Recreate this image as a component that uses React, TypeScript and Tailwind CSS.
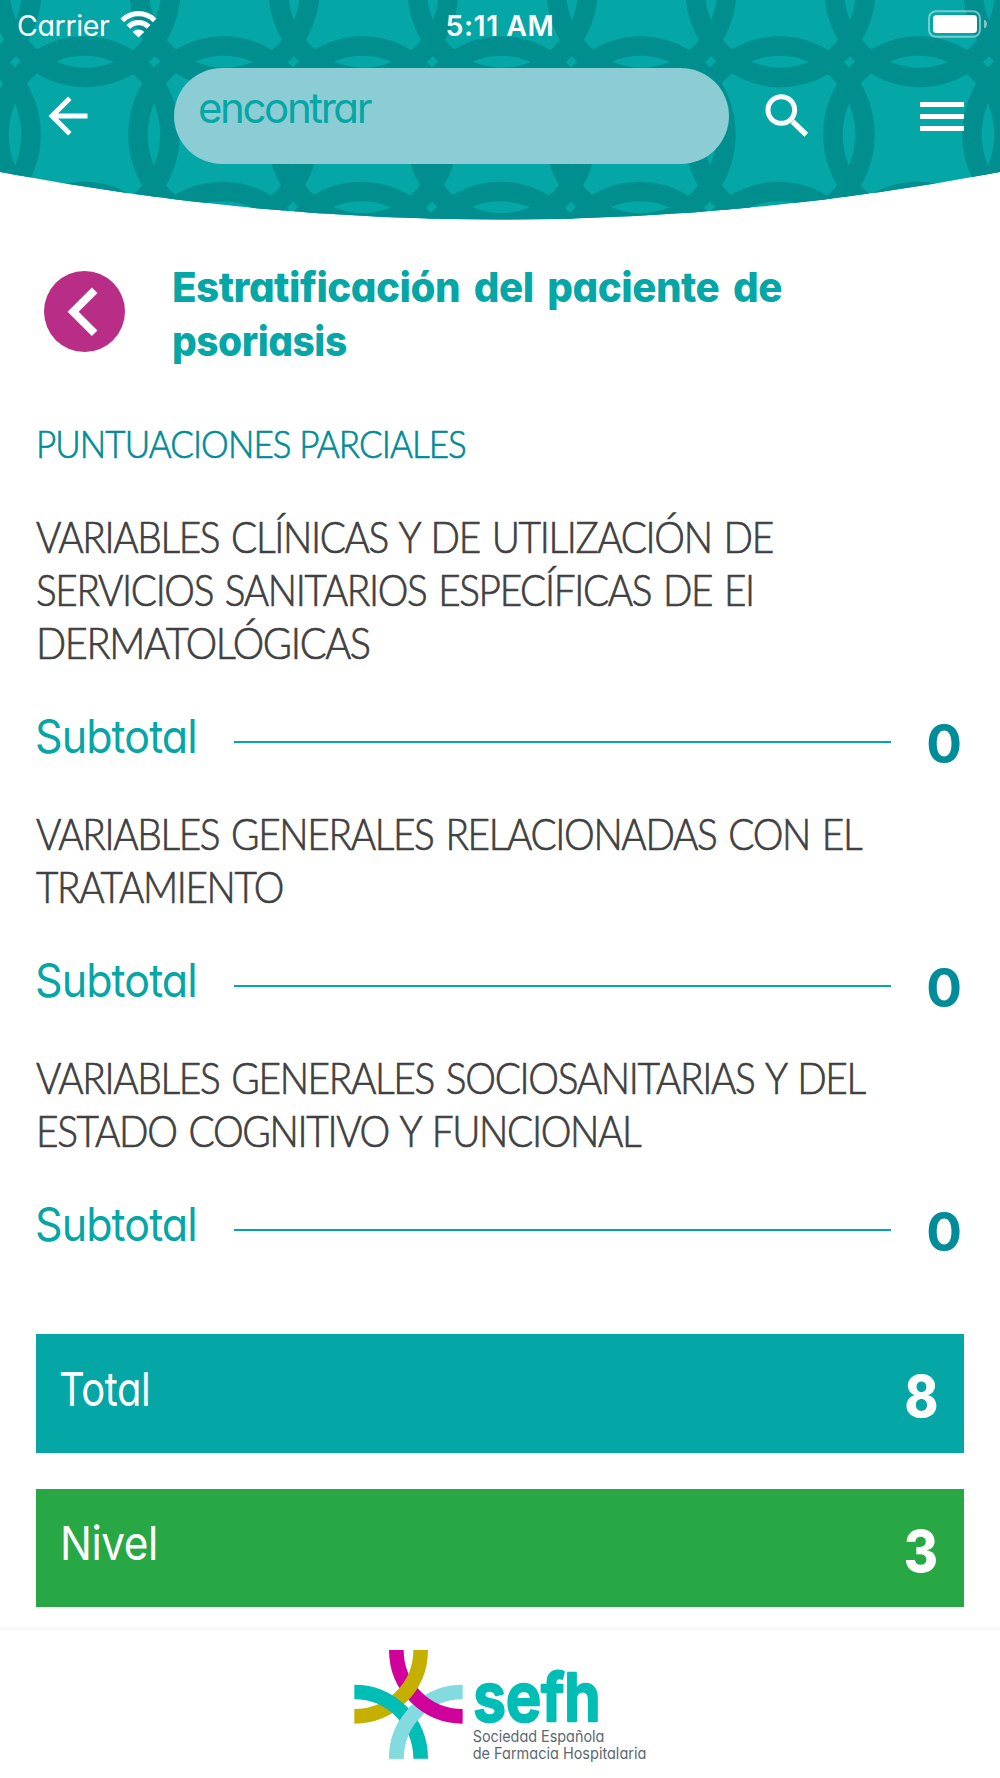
const rings = [
  { cx: 85.5, cy: -11 },
  { cx: 84.5, cy: 134.5 },
  { cx: 83.5, cy: 280 },
];

const columns = [-1, 0, 1, 2, 3, 4, 5, 6, 7];

const sections = [
  {
    lines: [
      { text: "VARIABLES CLÍNICAS Y DE UTILIZACIÓN DE", scale: "scale-x-[0.902]" },
      { text: "SERVICIOS SANITARIOS ESPECÍFICAS DE EI", scale: "scale-x-[0.9]" },
      { text: "DERMATOLÓGICAS", scale: "scale-x-[0.924]" },
    ],
    value: 0,
  },
  {
    lines: [
      { text: "VARIABLES GENERALES RELACIONADAS CON EL", scale: "scale-x-[0.902]" },
      { text: "TRATAMIENTO", scale: "scale-x-[0.9]" },
    ],
    value: 0,
  },
  {
    lines: [
      { text: "VARIABLES GENERALES SOCIOSANITARIAS Y DEL", scale: "scale-x-[0.903]" },
      { text: "ESTADO COGNITIVO Y FUNCIONAL", scale: "scale-x-[0.903]" },
    ],
    value: 0,
  },
];

const HeaderPattern = () => (
  <svg
    className="absolute inset-0 h-[220px] w-[1000px]"
    viewBox="0 0 1000 220"
    aria-hidden="true"
  >
    <defs>
      <clipPath id="curve">
        <path d="M0 0H1000V172Q500 267 0 172Z" />
      </clipPath>
    </defs>
    <g clipPath="url(#curve)">
      <rect width="1000" height="220" fill="#04a6a6" />
      <g fill="none" stroke="#008e8f" strokeWidth="19.5">
        {rings.map((row) =>
          columns.map((col) => (
            <ellipse
              key={`${row.cy}-${col}`}
              cx={row.cx + col * 139}
              cy={row.cy}
              rx="85.5"
              ry="88.5"
            />
          )),
        )}
      </g>
    </g>
  </svg>
);

const StatusBar = () => (
  <div className="relative grid h-12 grid-cols-3 items-center px-[17px] text-white">
    <div className="flex items-center gap-[11px]">
      <span className="pt-[4px] text-[28.5px] leading-none tracking-[-0.35px]">Carrier</span>
      <svg className="h-[28px] w-[37px]" viewBox="0 0 38 28" aria-hidden="true">
        <g fill="none" stroke="currentColor" strokeWidth="5.4">
          <path d="M2.3 10.2A23.6 23.6 0 0 1 35.7 10.2" />
          <path d="M8.6 17A14.7 14.7 0 0 1 29.4 17" />
        </g>
        <path d="M19 27.8L13 22.1A8.4 8.4 0 0 1 25 22.1Z" fill="currentColor" />
      </svg>
    </div>
    <span className="pt-[4px] text-center text-[28.5px] leading-none font-semibold tracking-[0.5px]">
      5:11 AM
    </span>
    <svg className="-mr-[4px] h-[28px] w-[60px] justify-self-end" viewBox="0 0 60 28" aria-hidden="true">
      <rect x="2" y="1.2" width="51" height="25.6" rx="7" fill="none" stroke="#fff" strokeOpacity=".45" strokeWidth="2" />
      <rect x="6" y="5" width="44" height="18" rx="3.5" fill="#fff" />
      <path d="M57 9.5q3 1.5 3 4.5t-3 4.5z" fill="#fff" fillOpacity=".5" />
    </svg>
  </div>
);

const Toolbar = () => (
  <div className="relative mt-5 flex h-24 items-center pr-9 pl-12 text-white">
    <svg className="h-[40px] w-[40px]" viewBox="0 0 40 40" fill="none" stroke="currentColor" strokeWidth="5" aria-hidden="true">
      <path d="M39.5 20H4M21.8 2.3L4 20L21.8 37.7" />
    </svg>
    <div className="ml-[86px] h-full w-[555px] rounded-full bg-[#8ccdd5] pt-[14px] pl-[24px]">
      <span className="block text-[42px] leading-[52px] font-normal tracking-[-2.4px] text-[#04a6a6]">
        encontrar
      </span>
    </div>
    <svg className="ml-[36px] h-[44px] w-[44px]" viewBox="0 0 44 44" fill="none" stroke="currentColor" aria-hidden="true">
      <circle cx="16.3" cy="16" r="13.3" strokeWidth="5" />
      <path d="M27.5 27.5L41.3 40.8" strokeWidth="5.5" />
    </svg>
    <div className="ml-auto flex flex-col gap-[7px]">
      <span className="h-[5px] w-11 bg-white" />
      <span className="h-[5px] w-11 bg-white" />
      <span className="h-[5px] w-11 bg-white" />
    </div>
  </div>
);

const Logo = () => (
  <svg className="h-[146px] w-[330px]" viewBox="0 33 990 438" aria-label="sefh">
    <g fill="none" strokeWidth="44">
      <path d="M368 216A199 200 0 0 0 169 416" stroke="#84dbdf" />
      <path d="M169 90A199 199 0 0 0 368 289" stroke="#d0009b" />
      <path d="M242 90A199 199 0 0 1 43 289" stroke="#c5b000" />
      <path d="M43 216A199 200 0 0 1 242 416" stroke="#00bdb5" />
      <path d="M230 272A199 200 0 0 0 169 416" stroke="#84dbdf" />
    </g>
    <text
      x="400"
      y="303"
      textLength="382"
      lengthAdjust="spacingAndGlyphs"
      strokeWidth="8"
      strokeLinejoin="round"
      className="fill-[#00bdb5] stroke-[#00bdb5] text-[200px] font-semibold"
    >
      sefh
    </text>
    <g className="fill-[#5b6873] text-[47px]">
      <text x="398" y="367" textLength="395" lengthAdjust="spacingAndGlyphs">
        Sociedad Española
      </text>
      <text x="398" y="417" textLength="521" lengthAdjust="spacingAndGlyphs">
        de Farmacia Hospitalaria
      </text>
    </g>
  </svg>
);

const App = () => {
  return (
    <div className="flex h-[1778px] w-[1000px] flex-col overflow-hidden bg-white font-['Inter',sans-serif] [font-feature-settings:'cv11']">
      <header className="relative h-[220px] shrink-0">
        <HeaderPattern />
        <StatusBar />
        <Toolbar />
      </header>

      <main className="flex h-[1407px] shrink-0 flex-col px-9">
        <div className="mt-[40px] flex h-[108px]">
          <svg className="mt-[11px] ml-2 h-[81px] w-[81px]" viewBox="0 0 82 82" aria-hidden="true">
            <circle cx="41" cy="41" r="41" fill="#b82e87" />
            <path d="M51.3 19.5L29.5 41.2L51.3 63" fill="none" stroke="#fff" strokeWidth="8" />
          </svg>
          <h1 className="ml-[47px] pt-px text-[41px] leading-[53.5px] font-extrabold tracking-[-0.5px] [word-spacing:5.5px] whitespace-nowrap text-[#04a6a6]">
            <span className="block origin-left scale-x-[0.983]">
              Estratificación del paciente de
            </span>
            <span className="block origin-left scale-x-[0.948]">psoriasis</span>
          </h1>
        </div>

        <h2 className="mt-[49px] origin-left scale-x-[0.934] font-['Lato',sans-serif] text-[37.5px] leading-[53px] font-light tracking-[-1px] whitespace-nowrap text-[#008c99] [-webkit-text-stroke:0.7px]">
          PUNTUACIONES PARCIALES
        </h2>

        <div className="mt-[40px] flex flex-col">
          {sections.map((section) => (
            <section key={section.lines[0].text} className="mb-[26px]">
              <h3 className="font-['Lato',sans-serif] text-[43px] leading-[53px] font-light tracking-[-1.5px] [word-spacing:3px] whitespace-nowrap text-[#404040] [-webkit-text-stroke:0.7px]">
                {section.lines.map((line) => (
                  <span key={line.text} className={`block origin-left ${line.scale}`}>
                    {line.text}
                  </span>
                ))}
              </h3>
              <div className="mt-[31px] flex h-[81px] items-center">
                <span className="-ml-px w-[199px] origin-left scale-x-[0.935] pb-[9px] text-[46px] leading-none font-normal tracking-[-1px] text-[#04a6a6]">
                  Subtotal
                </span>
                <span className="mt-[3px] h-[2px] w-[657px] bg-[#04a6a6]" />
                <span className="ml-auto pt-[8px] pr-[2px] text-[53px] leading-none font-bold text-[#008c99]">
                  {section.value}
                </span>
              </div>
            </section>
          ))}
        </div>

        <div className="mt-[39px] flex h-[119px] shrink-0 items-start justify-between bg-[#04a6a6] px-6 text-white">
          <span className="mt-[26px] -ml-px origin-left scale-x-[0.85] text-[47px] leading-[58px] font-normal tracking-[-0.5px]">
            Total
          </span>
          <span className="mt-[32px] mr-[1px] origin-right scale-x-[0.88] text-[58px] leading-[60px] font-extrabold">
            8
          </span>
        </div>
        <div className="mt-9 flex h-[118px] shrink-0 items-start justify-between bg-[#28a845] px-6 text-white">
          <span className="mt-[25px] origin-left scale-x-[0.9] text-[47px] leading-[58px] font-normal tracking-[-0.5px]">
            Nivel
          </span>
          <span className="mt-[32px] mr-[2px] origin-right scale-x-[0.9] text-[58px] leading-[60px] font-extrabold">
            3
          </span>
        </div>
      </main>

      <footer className="flex h-[151px] shrink-0 border-t-4 border-[#f9f9f9] pl-[340px]">
        <Logo />
      </footer>
    </div>
  );
};

export default App;
